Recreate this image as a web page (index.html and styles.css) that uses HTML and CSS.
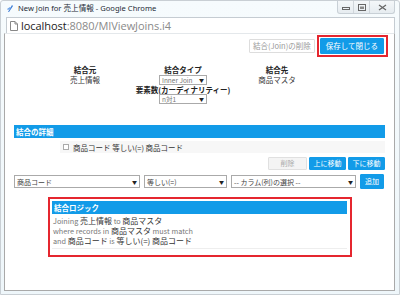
FILE: index.html
```html
<!DOCTYPE html>
<html lang="ja">
<head>
<meta charset="utf-8">
<title>New Join</title>
<link rel="stylesheet" href="styles.css">
</head>
<body>
<div class="window">
  <div class="titlebar">
    <svg class="app-icon" width="8" height="9" viewBox="0 0 8 9"><path d="M2 8 L6 1 L7 2 L3 8 Z" fill="#3a7bd5"/><path d="M1 5 L4 3 L5 4 L2 6Z" fill="#6aa2e8"/></svg>
    <span class="title">New Join for 売上情報 - Google Chrome</span>
    <div class="winbtns">
      <span class="wb"><svg width="8" height="6" viewBox="0 0 8 6"><rect x="0.5" y="3.5" width="7" height="2" fill="none" stroke="#666"/></svg></span>
      <span class="wb"><svg width="8" height="7" viewBox="0 0 8 7"><rect x="0.5" y="0.5" width="7" height="6" fill="none" stroke="#666"/><rect x="2" y="2.5" width="4" height="2.5" fill="#888"/></svg></span>
      <span class="wb wb-close"><svg width="9" height="7" viewBox="0 0 9 7"><path d="M1 1 L8 6 M8 1 L1 6" stroke="#666" stroke-width="1.3"/></svg></span>
    </div>
  </div>
  <div class="addrbar">
    <svg class="page-icon" width="8" height="10" viewBox="0 0 8 10"><path d="M0.5 0.5 H5 L7.5 3 V9.5 H0.5 Z" fill="#fff" stroke="#888"/><path d="M5 0.5 V3 H7.5" fill="none" stroke="#888"/></svg>
    <span class="url"><span class="host">localhost</span>:8080/MIViewJoins.i4</span>
  </div>
  <div class="content">
    <div class="top-actions">
      <button class="btn btn-light">結合(Join)の削除</button>
      <span class="hl hl-save"><button class="btn btn-blue btn-save">保存して閉じる</button></span>
    </div>
    <div class="meta">
      <div class="meta-col">
        <div class="label">結合元</div>
        <div class="value">売上情報</div>
      </div>
      <div class="meta-col">
        <div class="label">結合タイプ</div>
        <div class="select small"><span>Inner Join</span><i>▼</i></div>
        <div class="label label-mid">要素数(カーディナリティー)</div>
        <div class="select small"><span>n対1</span><i>▼</i></div>
      </div>
      <div class="meta-col">
        <div class="label">結合先</div>
        <div class="value">商品マスタ</div>
      </div>
    </div>
    <div class="section-bar">結合の詳細</div>
    <div class="detail-row"><span class="cb"></span>商品コード 等しい(=) 商品コード</div>
    <div class="btn-row">
      <button class="btn btn-disabled">削除</button>
      <button class="btn btn-blue">上に移動</button>
      <button class="btn btn-blue">下に移動</button>
    </div>
    <div class="select-row">
      <div class="select s1"><span>商品コード</span><i>▼</i></div>
      <div class="select s2"><span>等しい(=)</span><i>▼</i></div>
      <div class="select s3"><span>-- カラム(列)の選択 --</span><i>▼</i></div>
      <button class="btn btn-blue btn-add">追加</button>
    </div>
    <div class="hl hl-logic">
      <div class="logic">
        <div class="logic-bar">結合ロジック</div>
        <div class="logic-text">
          <div>Joining <b>売上情報</b> to <b>商品マスタ</b></div>
          <div>where records in <b>商品マスタ</b> must match</div>
          <div>and <b>商品コード</b> is <b>等しい(=)</b> <b>商品コード</b></div>
        </div>
      </div>
    </div>
  </div>
</div>
</body>
</html>
```

FILE: styles.css
```css
* { box-sizing: border-box; }
html, body { margin: 0; padding: 0; }
body {
  width: 400px;
  height: 295px;
  overflow: hidden;
  font-family: "Noto Sans CJK JP", "Noto Sans", sans-serif;
  background: #fff;
}
.window {
  width: 400px;
  height: 295px;
  display: flex;
  flex-direction: column;
  background: linear-gradient(#f6fbfd, #eef6fa);
  border: 1px solid #c9cfd4;
  border-radius: 3px 3px 0 0;
  padding: 0 4px 3px 3px;
}
.titlebar {
  height: 15px;
  display: flex;
  align-items: center;
  padding-left: 2px;
}
.app-icon { margin-right: 4px; }
.title {
  font-family: "Noto Sans", "Noto Sans CJK JP", sans-serif;
  font-size: 7.6px;
  color: #1c2a35;
  line-height: 1;
}
.winbtns {
  margin-left: auto;
  display: flex;
  height: 13px;
  margin-top: -2px;
  border: 1px solid #c8d0d6;
  border-top: none;
  border-radius: 0 0 3px 3px;
  background: linear-gradient(#f4f7f9, #e6ecf0);
}
.wb {
  width: 16px;
  display: flex;
  align-items: center;
  justify-content: center;
  border-right: 1px solid #d0d6db;
}
.wb-close { width: 24px; border-right: none; }
.addrbar {
  height: 16px;
  margin: 1px 0 0 2px;
  background: #fff;
  border: 1px solid #c5ccd2;
  border-bottom: none;
  display: flex;
  align-items: center;
  padding-left: 3px;
}
.page-icon { margin-right: 3px; }
.url {
  font-family: "Open Sans", "Noto Sans", sans-serif;
  font-size: 11px;
  color: #8a8a8a;
  line-height: 1;
  letter-spacing: -0.05px;
}
.host { color: #222; }
.content {
  flex: 1;
  background: #fff;
  border: 1px solid #a9a9a9;
  border-top: 1px solid #e4e8eb;
  padding: 0 9px 0 9px;
  font-size: 7.5px;
  color: #333;
}
.btn {
  font-family: inherit;
  font-size: 7.5px;
  line-height: 1;
  padding: 0 3px;
  height: 14px;
  border-radius: 1px;
  border: 1px solid transparent;
  white-space: nowrap;
  cursor: pointer;
}
.btn-blue { background: #129be8; color: #fff; border-color: #129be8; }
.btn-light { background: #fff; color: #999; border-color: #ddd; }
.btn-disabled { background: #f4f4f4; color: #aaa; border-color: #e0e0e0; }
.top-actions {
  display: flex;
  justify-content: flex-end;
  align-items: center;
  gap: 2px;
  margin-top: 1px;
}
.hl { border: 2px solid #e5262f; display: block; }
.hl-save { padding: 1px 2px 1px 1px; margin-right: -3px; }
.btn-save { height: 16px; padding: 0 5px; }
.meta {
  display: grid;
  grid-template-columns: 94px 102px 86px;
  margin-top: 8px;
  margin-left: 24px;
}
.meta-col {
  display: flex;
  flex-direction: column;
  align-items: center;
  line-height: 10px;
}
.label { font-weight: bold; color: #222; }
.label-mid { line-height: 9px; }
.value { color: #333; }
.select {
  display: flex;
  align-items: center;
  border: 1px solid #aaa;
  background: #fff;
  height: 11px;
  padding: 0 2px;
  font-size: 7px;
  color: #555;
}
.select span { flex: 1; white-space: nowrap; }
.select i { font-style: normal; font-size: 5px; color: #222; }
.meta-col .select.small { width: 48px; height: 10px; font-size: 6.5px; color: #777; }
.section-bar {
  margin-top: 21px;
  background: #129be8;
  color: #fff;
  font-weight: bold;
  height: 13px;
  line-height: 13px;
  padding-left: 2px;
  font-size: 7.5px;
}
.detail-row {
  margin: 3px 0 0 46px;
  background: #f7f7f7;
  height: 12px;
  display: flex;
  align-items: center;
  padding-left: 3px;
  color: #333;
}
.cb {
  width: 6px; height: 6px;
  border: 1px solid #aaa;
  background: #fff;
  margin-right: 4px;
}
.btn-row {
  display: flex;
  justify-content: flex-end;
  gap: 2px;
  margin-top: 4px;
}
.btn-row .btn { height: 13px; font-size: 7px; padding: 0; }
.btn-row .btn-disabled { width: 39px; }
.btn-row .btn-blue { width: 37px; }
.select-row {
  display: flex;
  align-items: center;
  gap: 4px;
  margin-top: 4px;
}
.select-row .select { height: 13px; font-size: 7px; color: #444; }
.s1 { width: 126px; }
.s2 { width: 83px; }
.s3 { width: 125px; }
.btn-add { height: 15px; width: 24px; padding: 0; font-size: 7px; }
.hl-logic {
  margin: 8px 33px 0 34px;
  padding: 2px 3px 6px 2px;
}
.logic-bar {
  background: #129be8;
  color: #fff;
  font-weight: bold;
  height: 13px;
  line-height: 13px;
  padding-left: 2px;
  font-size: 7.5px;
}
.logic-text {
  padding: 2px 1px 2px;
  border-bottom: 1px solid #eee;
  line-height: 9px;
  color: #777;
  font-size: 7.3px;
}
.logic-text b { font-weight: normal; color: #333; font-size: 8px; }
```
